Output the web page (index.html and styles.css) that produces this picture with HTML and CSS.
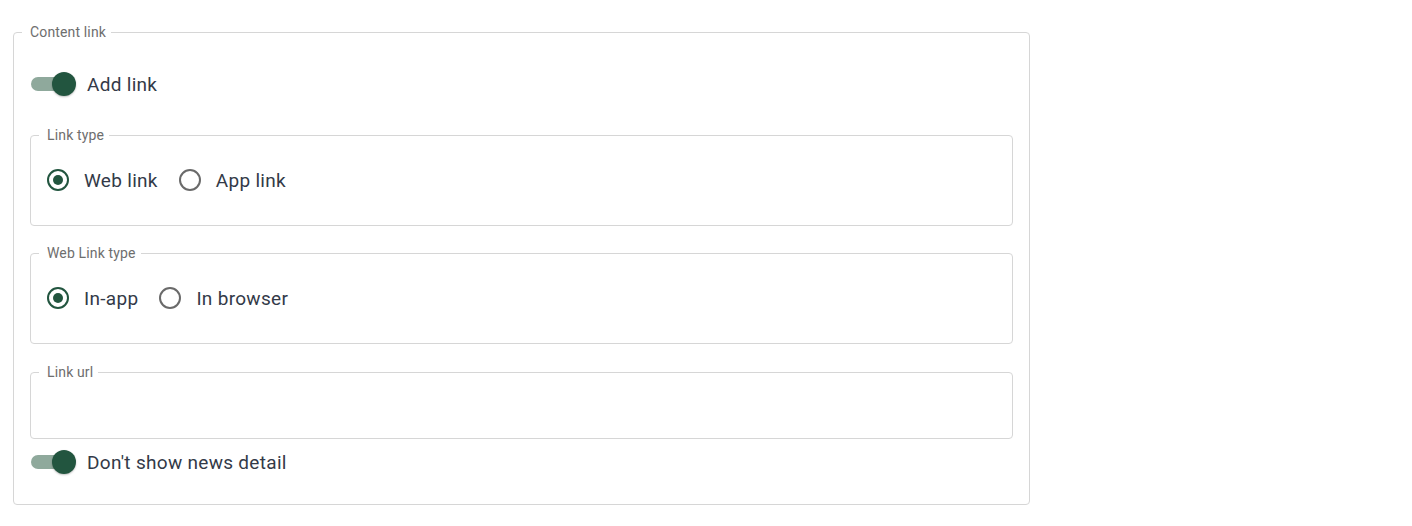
FILE: index.html
```html
<!DOCTYPE html>
<html>
<head>
<meta charset="utf-8">
<link rel="stylesheet" href="styles.css">
</head>
<body>
<div class="page">
  <fieldset class="box outer">
    <legend>Content link</legend>
    <div class="switch-row">
      <span class="switch"><span class="track"></span><span class="thumb"></span></span>
      <span class="label">Add link</span>
    </div>
    <fieldset class="box group">
      <legend>Link type</legend>
      <div class="radios">
        <label class="radio-item"><span class="radio checked"></span><span class="label">Web link</span></label>
        <label class="radio-item"><span class="radio"></span><span class="label">App link</span></label>
      </div>
    </fieldset>
    <fieldset class="box group second">
      <legend>Web Link type</legend>
      <div class="radios">
        <label class="radio-item"><span class="radio checked"></span><span class="label">In-app</span></label>
        <label class="radio-item"><span class="radio"></span><span class="label">In browser</span></label>
      </div>
    </fieldset>
    <fieldset class="box url">
      <legend>Link url</legend>
      <input class="url-input" type="text">
    </fieldset>
    <div class="switch-row last">
      <span class="switch"><span class="track"></span><span class="thumb"></span></span>
      <span class="label">Don't show news detail</span>
    </div>
  </fieldset>
</div>
</body>
</html>
```
FILE: styles.css
```css
* { box-sizing: border-box; }
html, body { margin: 0; padding: 0; background: #fff; }
body { font-family: Roboto, "Noto Sans", sans-serif; color: #333a48; }
.page { padding: 24px 0 0 13px; }
.box {
  margin: 0;
  border: 1px solid #d6d6d6;
  border-radius: 4px;
  min-width: 0;
}
.box legend {
  font-size: 14px;
  letter-spacing: 0.15px;
  line-height: 16px;
  color: #6e6e6e;
  margin-left: -8px;
  padding: 0 5px 0 8px;
}
.outer { width: 1017px; padding: 24px 16px 22px 16px; }
.switch-row { display: flex; align-items: center; height: 40px; }
.switch { position: relative; width: 45px; height: 26px; margin-left: 1px; flex: none; }
.switch .track {
  position: absolute; left: 0; top: 6px; width: 42px; height: 14px;
  border-radius: 7px; background: #8fa99c;
}
.switch .thumb {
  position: absolute; right: 0; top: 1px; width: 24px; height: 24px;
  border-radius: 50%; background: #22553f;
  box-shadow: 0 1px 2px rgba(0,0,0,0.25);
}
.label { letter-spacing: 0.3px; }
.switch-row .label { margin-left: 11px; font-size: 19px; }
.group { margin-top: 23px; padding: 17px 16px 25px 16px; }
.group.second { margin-top: 19px; }
.radios { display: flex; align-items: center; height: 40px; gap: 21px; }
.radio-item { display: flex; align-items: center; }
.radio {
  width: 22px; height: 22px; border-radius: 50%;
  border: 2px solid #6a6a6a; position: relative; flex: none;
}
.radio.checked { border-color: #22553f; }
.radio.checked::after {
  content: ""; position: absolute; left: 4px; top: 4px; width: 10px; height: 10px;
  border-radius: 50%; background: #22553f;
}
.radio-item .label { margin-left: 15px; font-size: 19px; }
.url { margin-top: 20px; padding: 0 16px; height: 75px; }
.url-input { border: 0; outline: none; width: 100%; height: 58px; background: transparent; font: inherit; }
.switch-row.last { margin-top: 3px; }
```
